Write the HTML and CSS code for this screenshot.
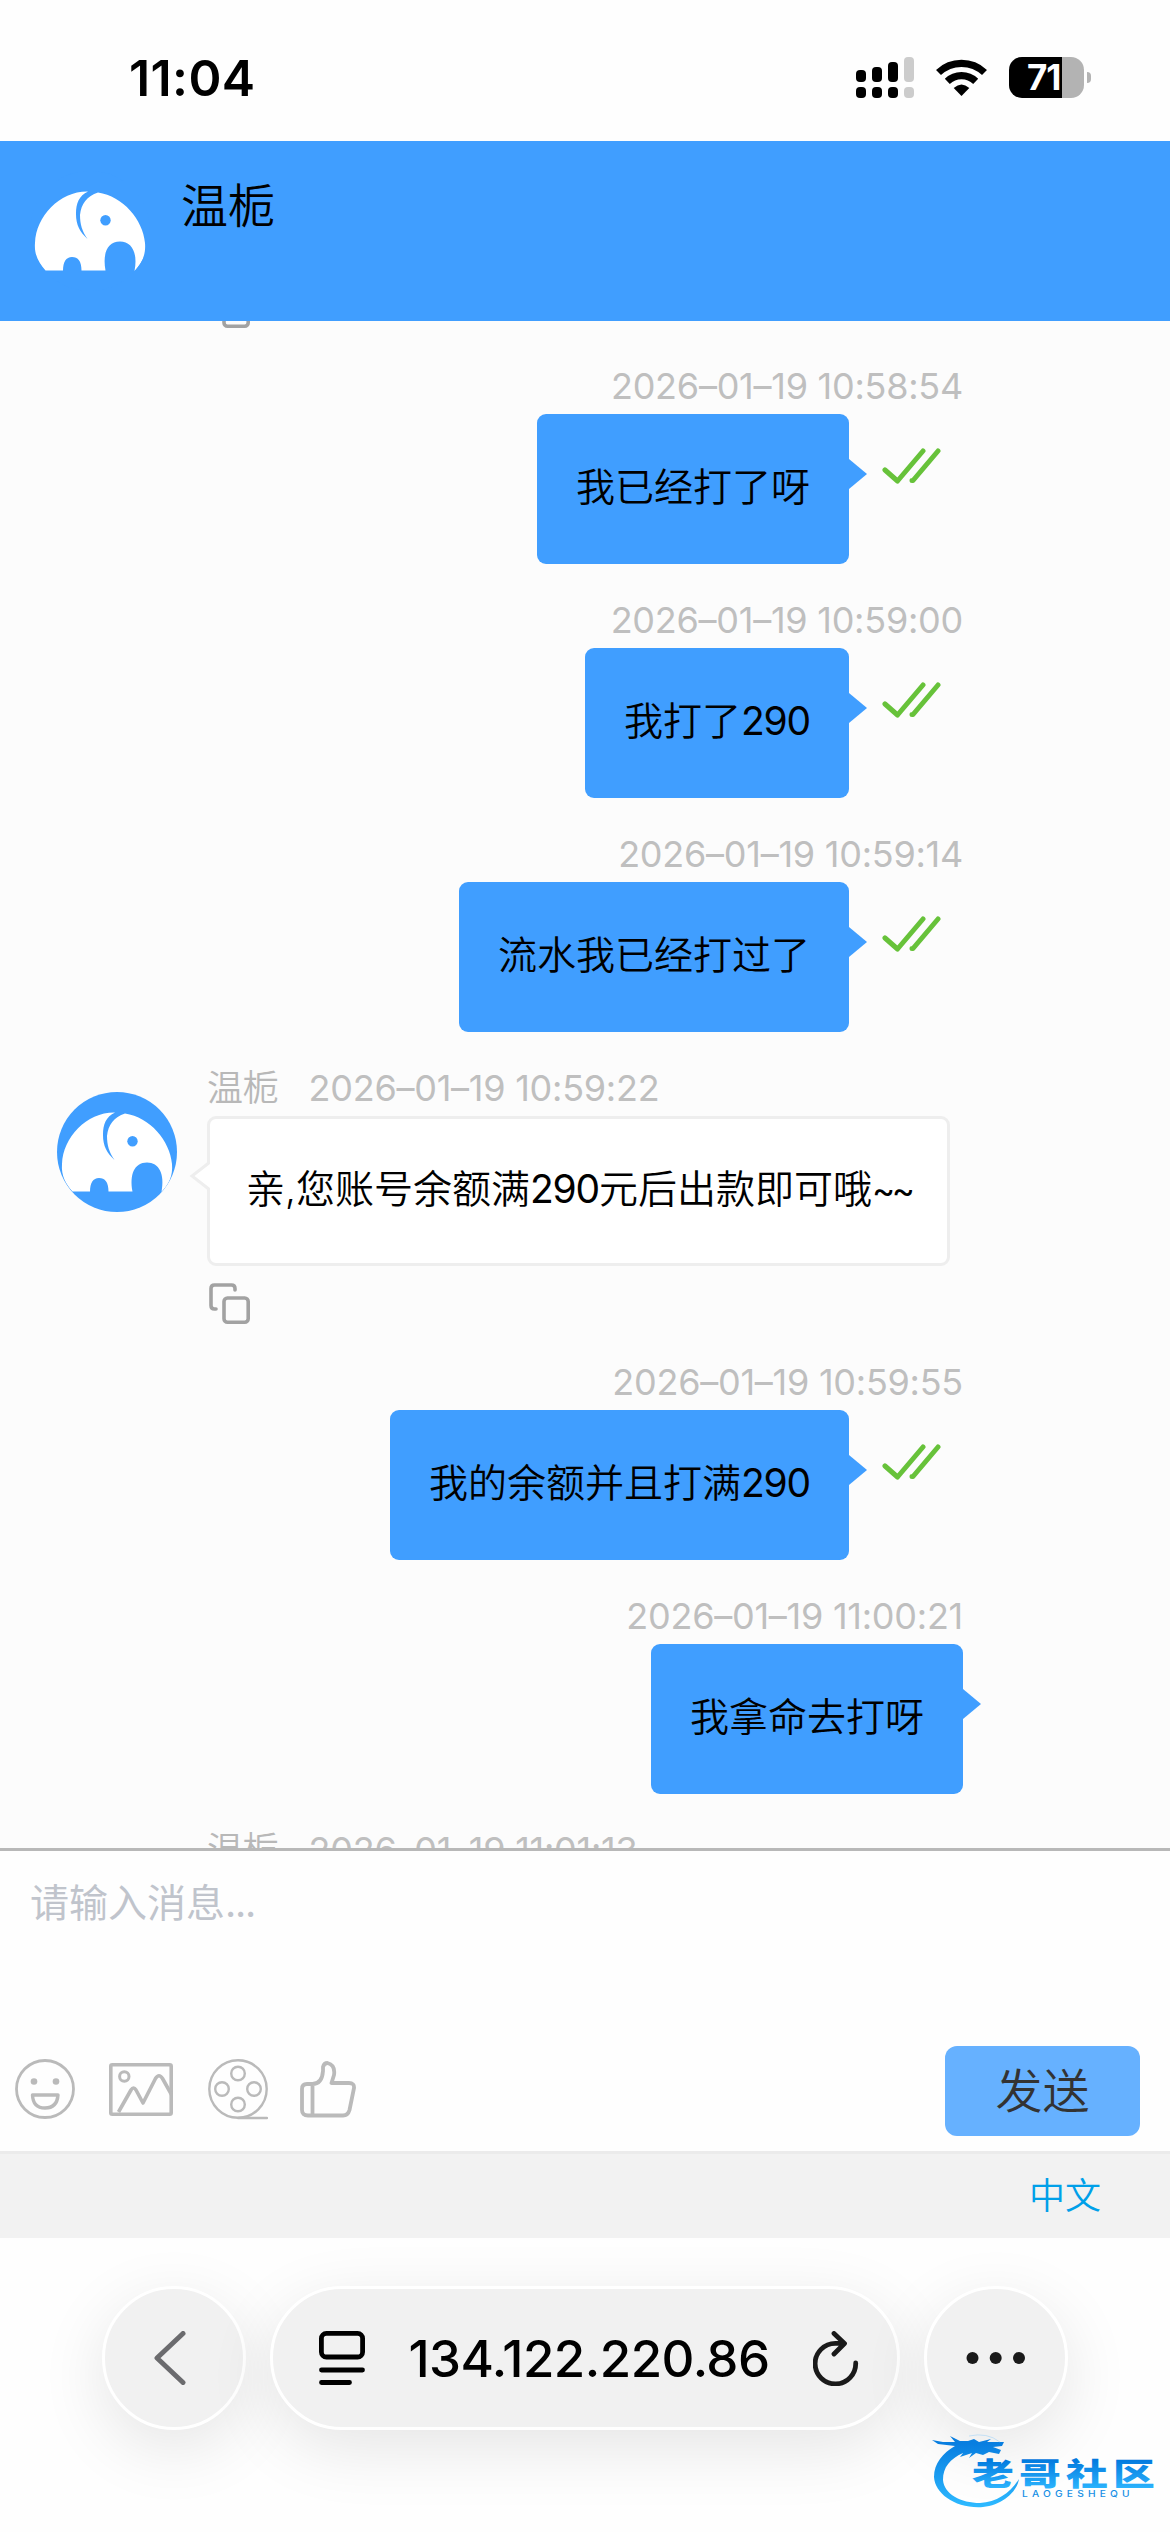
FILE: index.html
```
<!DOCTYPE html>
<html lang="zh-CN">
<head>
<meta charset="utf-8">
<title>温栀</title>
<link rel="stylesheet" href="styles.css">
</head>
<body>
<svg class="defs" width="0" height="0" aria-hidden="true">
  <symbol id="elephant" viewBox="0 0 120 120">
    <path fill="#fff" d="M5 72C6 45 30 20 58 20.500C49 25 46 32 46 43C46 54 50 61 57.500 68C52 60 50 53 50 44C51 33 57 25 68 21.500C93 25 113 49 115 72C116 84 112 92 104.500 100C108 82 102 70.500 90 70.500C77 70.500 72.500 83 75.500 99.500H51.500C51.500 90 48 86 42 86C36 86 33 91 33 99.500H15.500C9 92 4 84 5 72Z"/>
    <circle cx="75.500" cy="49.300" r="5.200" fill="#409eff"/>
  </symbol>
  <symbol id="copy" viewBox="0 0 41 41">
    <g fill="none" stroke="#a2a2a2" stroke-width="3.600" stroke-linecap="round"><path d="M26 7V5.500Q26 2 22.500 2H5.500Q2 2 2 5.500V22.500Q2 26 5.500 26H7"/><rect x="15" y="15" width="24.200" height="24.200" rx="3.500"/></g>
  </symbol>
  <symbol id="read" viewBox="0 0 60 37">
    <path fill="none" stroke="#67c23a" stroke-width="5" stroke-linecap="round" stroke-linejoin="round" d="M3 22L15.500 33L41 3M30 32.500H31L56 3"/>
  </symbol>
</svg>
<div class="screen">
  <header class="status">
    <span class="clock">11:04</span>
    <div class="status-icons">
      <svg width="58" height="41" viewBox="0 0 58 41"><rect y="13" width="10" height="12" rx="4"/><rect x="16" y="10" width="10" height="15" rx="4"/><rect x="32" y="5" width="10" height="20" rx="4"/><rect y="30" width="10" height="11" rx="4"/><rect x="16" y="30" width="10" height="11" rx="4"/><rect x="32" y="30" width="10" height="11" rx="4"/><g fill="#ccc"><rect x="48" width="10" height="25" rx="4"/><rect x="48" y="30" width="10" height="11" rx="4"/></g></svg>
      <svg class="wifi" width="51" height="37" viewBox="0 0 51 37"><g fill="none" stroke="#000" stroke-width="7.200"><path d="M2.500 13.500A33.500 33.500 0 0 1 48.500 13.500"/><path d="M11.300 22.300A20.500 20.500 0 0 1 39.700 22.300"/></g><path d="M17.700 29Q25.500 22 33.300 29L25.500 37Z"/></svg>
      <div class="battery"><span class="level">71</span></div><i class="nub"></i>
    </div>
  </header>

  <div class="agent">
    <svg class="avatar"><use href="#elephant"/></svg>
    <span class="agent-name">温栀</span>
  </div>

  <main class="chat">
    <div class="previous"><svg class="copy"><use href="#copy"/></svg></div>
    <section class="msg sent">
      <div class="meta">2026–01–19 10:58:54</div>
      <div class="row"><div class="bubble">我已经打了呀</div><svg class="read"><use href="#read"/></svg></div>
    </section>
    <section class="msg sent">
      <div class="meta">2026–01–19 10:59:00</div>
      <div class="row"><div class="bubble">我打了<span class="num">290</span></div><svg class="read"><use href="#read"/></svg></div>
    </section>
    <section class="msg sent">
      <div class="meta">2026–01–19 10:59:14</div>
      <div class="row"><div class="bubble">流水我已经打过了</div><svg class="read"><use href="#read"/></svg></div>
    </section>
    <section class="msg received">
      <svg class="avatar"><use href="#elephant"/></svg>
      <div class="content">
        <div class="meta"><span class="sender">温栀</span><span>2026–01–19 10:59:22</span></div>
        <div class="bubble">亲,您账号余额满<span class="num">290</span>元后出款即可哦<span class="tilde">~~</span><svg class="tail" width="21" height="32" viewBox="0 0 21 32"><path d="M21 2L3 16L21 30" fill="#fff" stroke="#eee" stroke-width="3"/></svg></div>
        <div class="actions"><svg class="copy"><use href="#copy"/></svg></div>
      </div>
    </section>
    <section class="msg sent">
      <div class="meta">2026–01–19 10:59:55</div>
      <div class="row"><div class="bubble">我的余额并且打满<span class="num">290</span></div><svg class="read"><use href="#read"/></svg></div>
    </section>
    <section class="msg sent">
      <div class="meta">2026–01–19 11:00:21</div>
      <div class="row"><div class="bubble">我拿命去打呀</div></div>
    </section>
    <section class="msg received last">
      <div class="content"><div class="meta"><span class="sender">温栀</span><span>2026–01–19 11:01:13</span></div></div>
    </section>
  </main>

  <section class="composer">
    <div class="placeholder">请输入消息<span class="dots">...</span></div>
    <div class="tools">
      <svg class="tool-smile" width="60" height="60" viewBox="0 0 60 60"><g fill="none" stroke="#bababa" stroke-width="2.800"><circle cx="30" cy="30" r="28.500"/><path d="M17.500 36H43Q42 49 30 49Q18 49 17.500 36Z" stroke-width="3.400" stroke-linejoin="round"/></g><g fill="#bababa"><circle cx="19" cy="22.500" r="3.300"/><circle cx="41" cy="22.500" r="3.300"/></g></svg>
      <svg class="tool-image" width="64" height="53" viewBox="0 0 64 53"><g fill="none" stroke="#bababa" stroke-width="3.600" stroke-linejoin="round"><rect x="1.800" y="1.800" width="60.400" height="49.400" rx="1.500"/><circle cx="15.300" cy="13.500" r="4.700" stroke-width="3"/><path d="M9.500 49L22 27Q24.500 23 27 27L34 40L46.500 15.500Q50 10 53.500 15.500L63 32.500"/></g></svg>
      <svg class="tool-film" width="60" height="61" viewBox="0 0 60 61"><g fill="none" stroke="#bababa" stroke-width="2.400" stroke-linecap="round"><circle cx="30" cy="30" r="28.700"/><circle cx="30" cy="14.500" r="6.800"/><circle cx="14" cy="30" r="6.800"/><circle cx="46" cy="30" r="6.800"/><circle cx="30" cy="45.500" r="6.800"/><path d="M30 59H59"/></g></svg>
      <svg class="tool-like" width="56" height="57" viewBox="0 0 56 57"><g fill="none" stroke="#bababa" stroke-width="3.800" stroke-linejoin="round"><path d="M12.500 23Q22 23 23 10V6Q24 2 27.500 2Q35.500 4 34 14L31.500 22H49Q54.500 22 54 27L49.500 49Q48 54.500 43 54.500H8Q2 54.500 2 49V28Q2 23 7 23ZM12.500 23V54"/></g></svg>
      <button class="send">发送</button>
    </div>
  </section>
  <footer class="lang">中文</footer>

  <nav class="browser">
    <div class="glass round"><svg class="back" width="32" height="54" viewBox="0 0 32 54"><path d="M29 2.500L3 27L29 51.500" fill="none" stroke="#6b6b6e" stroke-width="5" stroke-linecap="round" stroke-linejoin="round"/></svg></div>
    <div class="glass address">
      <svg width="46" height="54" viewBox="0 0 46 54"><g fill="none" stroke="#000" stroke-width="4.800" stroke-linecap="round"><rect x="2.400" y="2.400" width="41.200" height="23.600" rx="5"/><path d="M2.500 39H43.500M2.500 51.500H30.500"/></g></svg>
      <span class="url">134.122.220.86</span>
      <svg width="46" height="55" viewBox="0 0 46 55"><path d="M42.700 32A20.300 20.300 0 1 1 22.400 12.300H31M21 2.500L31.500 12.500L21 23" fill="none" stroke="#1a1a1a" stroke-width="4.800" stroke-linecap="round" stroke-linejoin="round"/></svg>
    </div>
    <div class="glass round"><svg width="60" height="12" viewBox="0 0 60 12" fill="#1a1a1a"><circle cx="6.500" cy="6" r="6"/><circle cx="29.700" cy="6" r="6"/><circle cx="53" cy="6" r="6"/></svg></div>
    <svg class="brand" width="224" height="80" viewBox="0 0 224 80">
      <defs><linearGradient id="blue" gradientUnits="userSpaceOnUse" x1="0" y1="14" x2="0" y2="76"><stop offset="0" stop-color="#087ee0"/><stop offset="1" stop-color="#2db9ff"/></linearGradient>
      <linearGradient id="word" x1="0" y1="0.200" x2="0" y2="0.900"><stop offset="0" stop-color="#0076dc"/><stop offset="1" stop-color="#2db6ff"/></linearGradient></defs>
      <path fill="url(#blue)" d="M1 10L12 12L24 12L19 6L29 11L37 11L43 9L48 12L60 9L56 12L73 12L71 16L62 17L70 20L68 24L58 22L52 25L45 23L38 28L41 23L29 27L32 23C19 29 12 37 12 50C13 64 30 73 49 73C66 72 79 63 88 49C86 62 71 75 52 77C25 79 4 64 3 47C3 33 12 23 24 16L7 14Z"/>
      <path d="M38 6Q56 2 69 12" stroke="#a5d4f7" fill="none" stroke-width=".6"/>
      <g class="brand-name" fill="url(#word)" transform="translate(41 55) scale(1.350 1)"><text x="0" y="0">老哥社区</text></g>
      <text class="brand-latin" x="0" y="0" transform="translate(91 67) scale(1.200 1)" fill="#168fe5">LAOGESHEQU</text>
    </svg>
  </nav>
</div>
</body>
</html>
```
FILE: styles.css
```
* { box-sizing: border-box; }
body { margin: 0; background: #fff; color: #000; font-family: Inter, "Noto Sans CJK SC", sans-serif; }
svg { display: block; flex: none; }
.defs { position: absolute; }
.screen { width: 1170px; height: 2532px; display: flex; flex-direction: column; overflow: hidden; }

.status { flex: none; height: 141px; padding: 14px 79px 0 129px; display: flex; justify-content: space-between; align-items: center; background: #fefefe; }
.clock { font-size: 50px; font-weight: 600; letter-spacing: 0.4px; }
.status-icons { display: flex; align-items: center; }
.wifi { margin: 0 22px; }
.battery { width: 75px; height: 41px; border-radius: 13px; background: linear-gradient(90deg, #000 53px, #b3b3b3 53px); padding-left: 18px; }
.level { color: #fff; font-size: 35px; font-weight: 700; line-height: 41px; letter-spacing: -1px; }
.nub { width: 4px; height: 11px; margin-left: 3px; border-radius: 0 4px 4px 0; background: #b3b3b3; }

.agent { flex: none; height: 180px; display: flex; align-items: flex-start; padding: 30px 30px 0; background: #409eff; }
.avatar { width: 120px; height: 120px; border-radius: 50%; background: #409eff; }
.agent-name { margin-left: 31px; font-size: 47px; line-height: 70px; font-weight: 350; }

.chat { flex: none; height: 1527px; overflow: hidden; background: #fcfcfc; font-weight: 350; }
.copy { width: 41px; height: 41px; }
.previous { height: 39px; padding: 0 0 32px 209px; display: flex; align-items: flex-end; overflow: hidden; }
.msg { display: flex; padding-bottom: 30px; }
.sent { flex-direction: column; align-items: flex-end; padding-right: 207px; }
.meta { height: 54px; font-size: 36px; line-height: 52px; font-weight: 400; color: #bfbfbf; white-space: nowrap; letter-spacing: -0.25px; }
.row { display: flex; align-items: flex-start; }
.bubble { position: relative; height: 150px; padding: 0 39px; border-radius: 9px; font-size: 39px; line-height: 146px; white-space: nowrap; }
.num { font-weight: 400; letter-spacing: -1.2px; }
.tilde { font-size: 35px; font-weight: 400; letter-spacing: -3.500px; }
.sent .bubble { background: #409eff; }
.sent .bubble::after { content: ""; position: absolute; left: 100%; top: 45px; border: 15px solid transparent; border-left: 18px solid #409eff; border-right: 0; }
.read { width: 60px; height: 37px; margin: 34px 21px 0 33px; }
.received { padding-left: 57px; }
.received .avatar { margin: 30px 30px 0 0; }
.received .bubble { background: #fff; border: 3px solid #eee; padding: 0 36px; line-height: 140px; width: 743px; }
.sender { margin-right: 30px; font-weight: 350; color: #b8b8b8; }
.tail { position: absolute; left: -21px; top: 41px; }
.actions { height: 60px; padding: 17px 0 0 2px; }
.last { padding-left: 207px; }

.composer { flex: none; height: 303px; border-top: 3px solid #b8b8b8; background: #fefefe; display: flex; flex-direction: column; justify-content: space-between; padding: 25px 30px 15px 15px; }
.placeholder { padding-left: 15px; font-size: 39px; line-height: 54px; color: #c0c4cc; }
.dots { letter-spacing: -1.3px; }
.tools { display: flex; align-items: center; height: 90px; }
.tools > svg { position: relative; top: -2px; }
.tool-smile { margin-right: 34px; }
.tool-image { margin-right: 35px; }
.tool-film { margin-right: 32px; }
.send { margin-left: auto; width: 195px; height: 90px; border: 0; padding: 0; border-radius: 12px; background: #66b1ff; color: #333; font: 350 47px/90px Inter, "Noto Sans CJK SC", sans-serif; }
.lang { flex: none; height: 87px; padding-right: 69px; border-top: 3px solid #ebebeb; background: #f2f2f2; color: #00a0e9; font-size: 36px; line-height: 84px; font-weight: 350; text-align: right; }

.browser { flex: 1; position: relative; display: flex; align-items: flex-start; justify-content: center; gap: 24px; padding-top: 48px; background: #fefefe; }
.glass { height: 144px; border: 3px solid #fff; border-radius: 72px; background: #f1f1f1; display: flex; align-items: center; box-shadow: 0 18px 66px rgba(0, 0, 0, .1); }
.round { width: 144px; justify-content: center; }
.back { margin-right: 8px; }
.address { width: 630px; justify-content: space-between; padding: 0 38px 0 46px; }
.url { font-size: 51px; font-weight: 500; letter-spacing: -0.5px; }
.brand { position: absolute; left: 931px; top: 192px; overflow: visible; }
.brand-name { font: 900 31px "Noto Sans CJK SC", sans-serif; letter-spacing: 3.800px; }
.brand-latin { font: 500 8.500px Inter, sans-serif; letter-spacing: 3.500px; }
```
